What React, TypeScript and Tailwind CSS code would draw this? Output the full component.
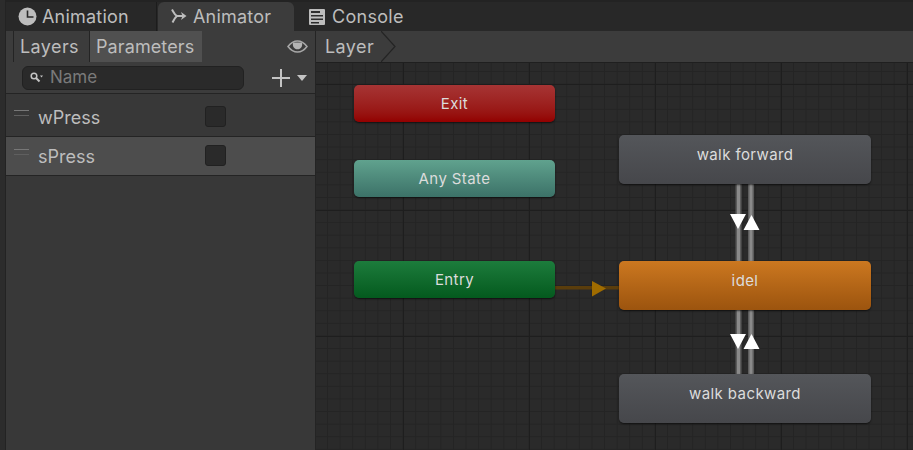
const font = { fontFamily: "Inter, 'Noto Sans', sans-serif" };

function ClockIcon() {
  return (
    <svg width="19" height="19" viewBox="0 0 19 19" className="shrink-0">
      <circle cx="9.5" cy="9.5" r="9" fill="#bdbdbd" />
      <path d="M9.5 3.500v6.500h6" fill="none" stroke="#282828" strokeWidth="1.600" />
    </svg>
  );
}

function AnimatorIcon() {
  return (
    <svg width="16" height="15" viewBox="0 0 16 15" className="shrink-0">
      <path d="M1 .5c1.500 2.500 2.500 5.500 5 6.500h7M1.500 13.500c1-2 2.500-5 4.500-6.500" fill="none" stroke="#bdbdbd" strokeWidth="2" />
      <path d="M10 3l5.500 4-5.500 4 1.500-4z" fill="#bdbdbd" />
    </svg>
  );
}

function ConsoleIcon() {
  return (
    <svg width="16" height="16" viewBox="0 0 16 16" className="shrink-0">
      <rect width="16" height="16" rx="1" fill="#bdbdbd" />
      <path d="M2 2h9v2H2zM2 6h12v1.500H2zM2 9.500h12V11H2zM2 13h8v1.500H2z" fill="#2c2c2c" />
    </svg>
  );
}

function SearchIcon() {
  return (
    <svg width="13" height="11" viewBox="0 0 13 11" className="shrink-0">
      <circle cx="4" cy="4" r="2.800" fill="none" stroke="#c4c4c4" strokeWidth="1.500" />
      <path d="M6 6l3.500 3.500" stroke="#c4c4c4" strokeWidth="2" />
      <path d="M10 3.500h3l-1.500 2z" fill="#c4c4c4" />
    </svg>
  );
}

function EyeIcon() {
  return (
    <svg width="21" height="13" viewBox="0 0 21 13" className="my-auto ml-[85px] shrink-0">
      <path d="M1 6.500C4 2.500 7 1 10.500 1S17 2.500 20 6.500C17 10.500 14 12 10.500 12S4 10.500 1 6.500z" fill="none" stroke="#a8a8a8" strokeWidth="1.500" />
      <path d="M6 2.500h9c.8 3.500-1 6.800-4.500 6.800S5.200 6 6 2.500z" fill="#b4b4b4" />
    </svg>
  );
}

function PlusIcon() {
  return (
    <svg width="18" height="18" viewBox="0 0 18 18" className="ml-[28px] shrink-0">
      <path d="M0 9h18M9 0v18" stroke="#c4c4c4" strokeWidth="2" />
    </svg>
  );
}

function ParamRow({ name, selected }: { name: string; selected?: boolean }) {
  return (
    <div className={`flex h-[39px] items-center border-b border-[#242424] ${selected ? "bg-[#4d4d4d]" : ""}`}>
      <div className="ml-2 flex w-[15px] flex-col gap-[4px] pb-[9px]">
        <div className="h-px bg-[#777777]" />
        <div className="h-px bg-[#5f5f5f]" />
      </div>
      <span className="ml-[9px] w-[167px] pt-[2px] text-[18px] leading-none text-[#bdbdbd]">{name}</span>
      <div className="mb-[2px] h-[21px] w-[21px] rounded-[3px] border border-[#212121] bg-[#2a2a2a]" />
    </div>
  );
}

function StateNode({ label, className }: { label: string; className: string }) {
  return (
    <div className={`absolute flex justify-center rounded-[5px] text-[15px] tracking-[0.4px] text-[#dcdcdc] shadow-[0_1px_2px_rgba(0,0,0,0.6)] ${className}`}>
      {label}
    </div>
  );
}

export default function App() {
  return (
    <div style={font} className="flex h-[450px] w-[913px] flex-col overflow-hidden border-l-[5px] border-[#2c2c2c] bg-[#232323] pl-px">
      {/* tabs */}
      <div className="flex h-[31px] shrink-0 items-end border-t-2 border-[#232323] bg-[#282828] text-[18px] tracking-[0.2px] text-[#bdbdbd]">
        <div className="flex h-full w-[151px] items-center gap-[5px] border-r border-[#1c1c1c] pl-[12px]">
          <ClockIcon />
          <span>Animation</span>
        </div>
        <div className="ml-px flex h-full w-[136px] items-center gap-[6px] rounded-t-[6px] bg-[#3c3c3c] pl-[13px]">
          <AnimatorIcon />
          <span>Animator</span>
        </div>
        <div className="flex h-full items-center gap-[7px] pl-[15px] tracking-[0.3px]">
          <ConsoleIcon />
          <span>Console</span>
        </div>
      </div>

      <div className="flex min-h-0 flex-1">
        {/* parameters panel */}
        <div className="flex w-[310px] shrink-0 flex-col border-r border-[#242424] bg-[#383838]">
          <div className="flex h-[31px] shrink-0 items-stretch bg-[#3c3c3c] pl-[7px] text-[18px] text-[#bdbdbd]">
            <div className="flex w-[77px] items-center border-x border-[#242424] pl-[6px] tracking-[0.4px]">Layers</div>
            <div className="flex w-[112px] items-center bg-[#505050] pl-[6px] tracking-[0.1px]">Parameters</div>
            <EyeIcon />
          </div>
          <div className="flex h-[32px] shrink-0 items-center border-b border-[#242424] bg-[#3c3c3c] pl-[16px]">
            <div className="flex h-[24px] w-[222px] items-center gap-[7px] rounded-[6px] border border-[#212121] bg-[#2a2a2a] pl-[7px] text-[17px] text-[#7a7a7a]">
              <SearchIcon />
              <span>Name</span>
            </div>
            <PlusIcon />
            <div className="ml-[7px] h-0 w-0 border-x-[5px] border-t-[6px] border-x-transparent border-t-[#c4c4c4]" />
          </div>
          <div className="h-[4px] shrink-0" />
          <ParamRow name="wPress" />
          <ParamRow name="sPress" selected />
        </div>

        {/* graph */}
        <div className="flex min-w-0 flex-1 flex-col">
          <div className="flex h-[31px] shrink-0 items-center bg-[#3c3c3c] pl-[9px] text-[18px] tracking-[0.4px] text-[#bdbdbd]">
            <span>Layer</span>
            <svg width="16" height="31" viewBox="0 0 16 31" className="ml-[7px]">
              <path d="M0 0l14 15.500L0 31" fill="none" stroke="#242424" strokeWidth="1.200" />
            </svg>
          </div>
          <div className="relative flex-1 border-t border-[#1f1f1f] bg-[#2a2a2a] bg-[image:linear-gradient(#1e1e1e_1px,transparent_1px),linear-gradient(90deg,#1e1e1e_1px,transparent_1px),linear-gradient(#242424_1px,transparent_1px),linear-gradient(90deg,#242424_1px,transparent_1px)] bg-[size:126px_126px,126px_126px,12.6px_12.6px,12.6px_12.6px] bg-[position:0_21px,87px_0,0_8px,11px_0]">
            <svg width="596" height="387" viewBox="316 63 596 387" className="absolute left-0 top-0">
              <g fill="#5c5c5c">
                <rect x="735.500" y="184" width="6" height="77" />
                <rect x="748" y="184" width="6" height="77" />
                <rect x="735.500" y="310" width="6" height="64" />
                <rect x="748" y="310" width="6" height="64" />
              </g>
              <g fill="#8a8a8a">
                <rect x="737" y="184" width="3" height="77" />
                <rect x="749.500" y="184" width="3" height="77" />
                <rect x="737" y="310" width="3" height="64" />
                <rect x="749.500" y="310" width="3" height="64" />
              </g>
              <path d="M730 214h16l-8 15zM730 334h16l-8 15z" fill="#ffffff" />
              <path d="M743.500 230h16l-8-15zM743.500 349h16l-8-15z" fill="#ffffff" />
              <rect x="555" y="286" width="64" height="3.500" fill="#5a3d0c" />
              <path d="M592 281l14 7.500-14 8z" fill="#a06c00" />
            </svg>
            <StateNode label="Exit" className="left-[38px] top-[22px] h-[37px] w-[201px] bg-gradient-to-b from-[#a63434] to-[#930000] pt-[8px]" />
            <StateNode label="Any State" className="left-[38px] top-[97px] h-[37px] w-[201px] bg-gradient-to-b from-[#60a28e] to-[#3c7268] pt-[8px]" />
            <StateNode label="Entry" className="left-[38px] top-[198px] h-[37px] w-[201px] bg-gradient-to-b from-[#1c7c3c] to-[#045a1e] pt-[8px]" />
            <StateNode label="walk forward" className="left-[303px] top-[72px] h-[49px] w-[252px] bg-gradient-to-b from-[#54565a] to-[#46474b] pt-[9px]" />
            <StateNode label="idel" className="left-[303px] top-[198px] h-[49px] w-[252px] bg-gradient-to-b from-[#cc7820] to-[#9c540e] pt-[9px]" />
            <StateNode label="walk backward" className="left-[303px] top-[311px] h-[49px] w-[252px] bg-gradient-to-b from-[#54565a] to-[#46474b] pt-[9px]" />
          </div>
        </div>
      </div>
    </div>
  );
}
